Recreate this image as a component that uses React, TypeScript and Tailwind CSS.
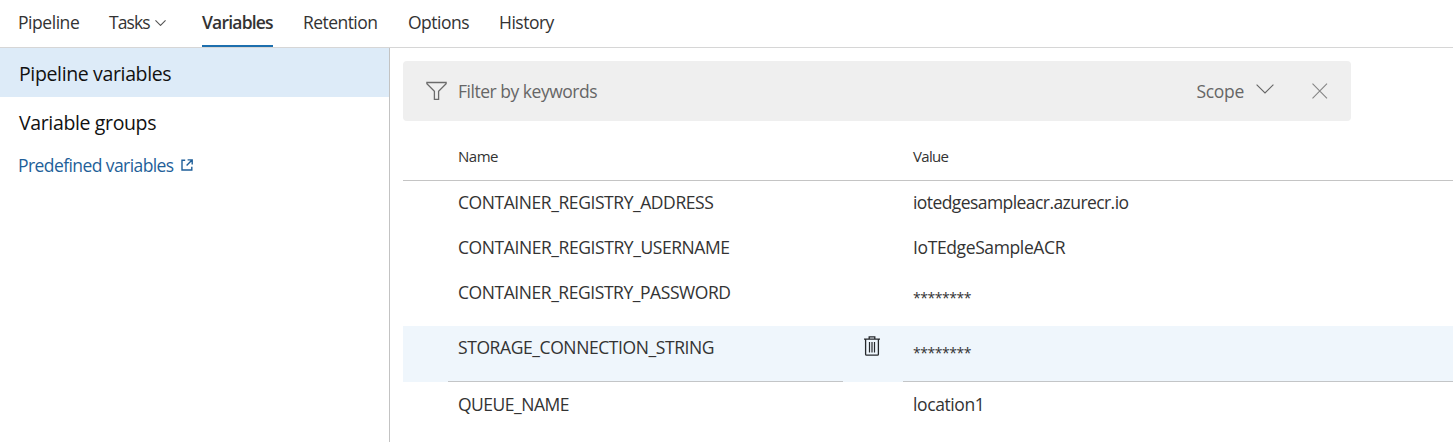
function Chevron({ className }: { className: string }) {
  return (
    <svg className={className} viewBox="0 0 18 10" fill="none" stroke="currentColor" strokeWidth="1.1">
      <path d="M0.6 0.6 9 9 17.4 0.6" vectorEffect="non-scaling-stroke" />
    </svg>
  );
}

function FunnelIcon() {
  return (
    <svg className="h-5 w-[21px] shrink-0" viewBox="0 0 21 20" fill="none" stroke="#6b6b6b" strokeWidth="1.3">
      <path d="M0.9 1.5H20.1V2.7L12.6 10.2V18.4H8.4V10.2L0.9 2.7Z" />
    </svg>
  );
}

function CloseIcon() {
  return (
    <svg className="h-4 w-[17px] shrink-0" viewBox="0 0 17 16" fill="none" stroke="#858585" strokeWidth="1.1">
      <path d="M1.5 0.7 16 15.3M16 0.7 1.5 15.3" />
    </svg>
  );
}

function TrashIcon() {
  return (
    <svg className="h-5 w-4" viewBox="0 0 16 20" fill="none" stroke="#26292c" strokeWidth="1.3">
      <path d="M0 3.1H16M5.2 3V0.9H10.8V3M1.6 3.1V18.2Q1.6 19.2 2.6 19.2H13.4Q14.4 19.2 14.4 18.2V3.1" />
      <path d="M5.5 6V16.4M8 6V16.4M10.5 6V16.4" strokeWidth="1.2" />
    </svg>
  );
}

function ExternalIcon() {
  return (
    <svg className="size-3" viewBox="0 0 12 12" fill="none" stroke="#1f5f99" strokeWidth="1.4">
      <path d="M4.2 1.2H1V11H10.8V7.8M6.6 0.9H11.2V5.4M11 1 5.6 6.4" />
    </svg>
  );
}

const tabs = [
  { label: "Pipeline", style: "ml-[18px] w-[91px] tracking-[-0.45px]" },
  { label: "Tasks", style: "w-[93px] tracking-[-0.9px]", menu: true },
  { label: "Variables", style: "w-[71px] mr-[30px] font-semibold tracking-[-0.8px]", active: true },
  { label: "Retention", style: "w-[105px] tracking-[-0.55px]" },
  { label: "Options", style: "w-[91px] tracking-[-0.5px]" },
  { label: "History", style: "w-[60px] tracking-[-0.5px]" },
];

const rows = [
  { name: "CONTAINER_REGISTRY_ADDRESS", nameStyle: "tracking-[-0.43px]", value: "iotedgesampleacr.azurecr.io", valueStyle: "tracking-[-0.57px]", row: "h-[45px]" },
  { name: "CONTAINER_REGISTRY_USERNAME", nameStyle: "tracking-[-0.42px]", value: "IoTEdgeSampleACR", valueStyle: "tracking-[-0.38px]", row: "h-[45px]" },
  { name: "CONTAINER_REGISTRY_PASSWORD", nameStyle: "tracking-[-0.44px]", value: "********", valueStyle: "pt-[6px] text-[14px] tracking-[-0.45px]", row: "h-[55px]" },
  { name: "STORAGE_CONNECTION_STRING", nameStyle: "tracking-[-0.41px]", value: "********", valueStyle: "pt-[6px] text-[14px] tracking-[-0.45px]", row: "h-14 bg-[#eff6fc]", active: true },
  { name: "QUEUE_NAME", nameStyle: "tracking-[-0.5px]", value: "location1", valueStyle: "tracking-[-0.4px]", row: "h-[60px] pt-px" },
];

export default function App() {
  return (
    <div className="flex h-[442px] w-[1453px] flex-col overflow-hidden bg-white font-['Open_Sans',sans-serif] text-[17.5px] whitespace-nowrap text-[#333]">
      <nav className="flex h-12 shrink-0 border-b border-[#d6d6d6]">
        {tabs.map((t) => (
          <div key={t.label} className={`flex h-[47px] shrink-0 border-b-2 leading-[44px] ${t.active ? "border-[#1d6fae]" : "border-transparent"} ${t.style}`}>
            {t.label}
            {t.menu && <Chevron className="mt-[20px] ml-[5px] h-[6px] w-[11px] text-[#555]" />}
          </div>
        ))}
      </nav>
      <div className="flex flex-1">
        <aside className="w-[390px] shrink-0 border-r border-[#c3c3c3]">
          <div className="h-[49px] bg-[#ddebf8] pl-[19px] text-[19.5px] leading-[51px] tracking-[-0.36px] text-[#111]">Pipeline variables</div>
          <div className="h-[49px] pl-[19px] text-[19.5px] leading-[51px] tracking-[-0.36px] text-[#111]">Variable groups</div>
          <a className="flex h-[38px] items-center gap-[7px] pl-[18px] tracking-[-0.58px] text-[#1f5f99]">
            Predefined variables
            <ExternalIcon />
          </a>
        </aside>
        <main className="flex flex-1 flex-col pt-[13px] pl-[13px]">
          <div className="flex h-[60px] w-[948px] shrink-0 items-center rounded bg-[#efefef] pr-[23px] pl-[23px] text-[#666]">
            <FunnelIcon />
            <span className="ml-[11px] flex-1 tracking-[-0.48px]">Filter by keywords</span>
            <span className="tracking-[-0.3px]">Scope</span>
            <Chevron className="mr-[37px] mb-1 ml-3 h-[10px] w-[18px]" />
            <CloseIcon />
          </div>
          <div className="flex h-[60px] shrink-0 items-center border-b border-[#c4c4c4] pt-3 pl-[55px] text-[15px]">
            <div className="w-[455px] tracking-[-0.5px]">Name</div>
            <div className="tracking-[-0.7px]">Value</div>
          </div>
          {rows.map((r) => (
            <div key={r.name} className={`flex shrink-0 pl-[45px] leading-[42px] ${r.row}`}>
              <div className={`w-[395px] border-b pl-[10px] ${r.active ? "border-[#c3c5c7]" : "border-transparent"} ${r.nameStyle}`}>{r.name}</div>
              <div className="flex w-[60px] pt-[10px] pl-[21px]">{r.active && <TrashIcon />}</div>
              <div className={`flex-1 border-b pl-[10px] ${r.active ? "border-[#c3c5c7]" : "border-transparent"} ${r.valueStyle}`}>{r.value}</div>
            </div>
          ))}
        </main>
      </div>
    </div>
  );
}
